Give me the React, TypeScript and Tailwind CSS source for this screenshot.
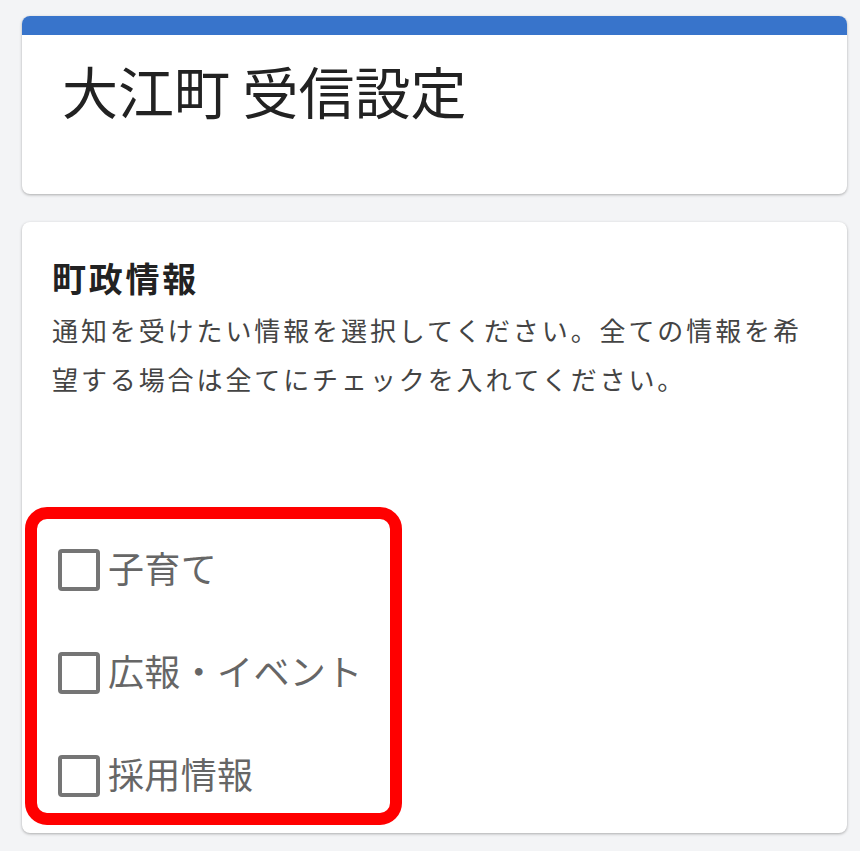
import { useState } from 'react';

const font = "font-['Noto_Sans_CJK_JP','Noto_Sans',sans-serif]";

const topics = ['子育て', '広報・イベント', '採用情報'];

function CheckRow({ label, checked, onToggle }: { label: string; checked: boolean; onToggle: () => void }) {
  return (
    <label className="flex items-center cursor-pointer" onClick={onToggle}>
      <span className="w-[42px] h-[42px] border-[4px] border-[#757575] rounded-[4px] flex items-center justify-center">
        {checked && <span className="w-[22px] h-[22px] bg-[#757575] rounded-[2px]" />}
      </span>
      <span className="ml-2 -mt-[6px] text-[36px] leading-[42px] tracking-[0.01em] text-[#666666]">{label}</span>
    </label>
  );
}

export default function App() {
  const [selected, setSelected] = useState<string[]>([]);

  const toggle = (t: string) =>
    setSelected((s) => (s.includes(t) ? s.filter((x) => x !== t) : [...s, t]));

  return (
    <div className={`min-h-screen bg-[#f3f4f6] pt-4 pb-4 pl-[22px] pr-[13px] ${font}`}>
      {/* Header card */}
      <div className="rounded-lg bg-white overflow-hidden shadow-[0_1px_3px_rgba(0,0,0,0.3)]">
        <div className="h-[19px] bg-[#3874cb]" />
        <div className="pl-10 pt-[21px] pb-[71px]">
          <h1 className="text-[56px] leading-[67px] text-[#222222]">大江町 受信設定</h1>
        </div>
      </div>

      {/* Topics card */}
      <div className="mt-[28px] rounded-lg bg-white pt-[34px] pb-[8px] shadow-[0_1px_3px_rgba(0,0,0,0.3)]">
        <div className="pl-[30px] pr-[40px]">
          <h2 className="text-[34px] leading-[44px] tracking-[0.08em] font-bold text-[#222222]">町政情報</h2>
          <p className="mt-[5px] text-[26px] leading-[49px] tracking-[2.9px] text-[#444444]">
            通知を受けたい情報を選択してください。全ての情報を希望する場合は全てにチェックを入れてください。
          </p>
        </div>

        <div className="ml-[3px] mt-[104px] w-[377px] border-[12px] border-[#ff0000] rounded-[22px] pt-[30px] pl-[21px] pb-[16px] flex flex-col gap-[61px]">
          {topics.map((t) => (
            <CheckRow key={t} label={t} checked={selected.includes(t)} onToggle={() => toggle(t)} />
          ))}
        </div>
      </div>
    </div>
  );
}
